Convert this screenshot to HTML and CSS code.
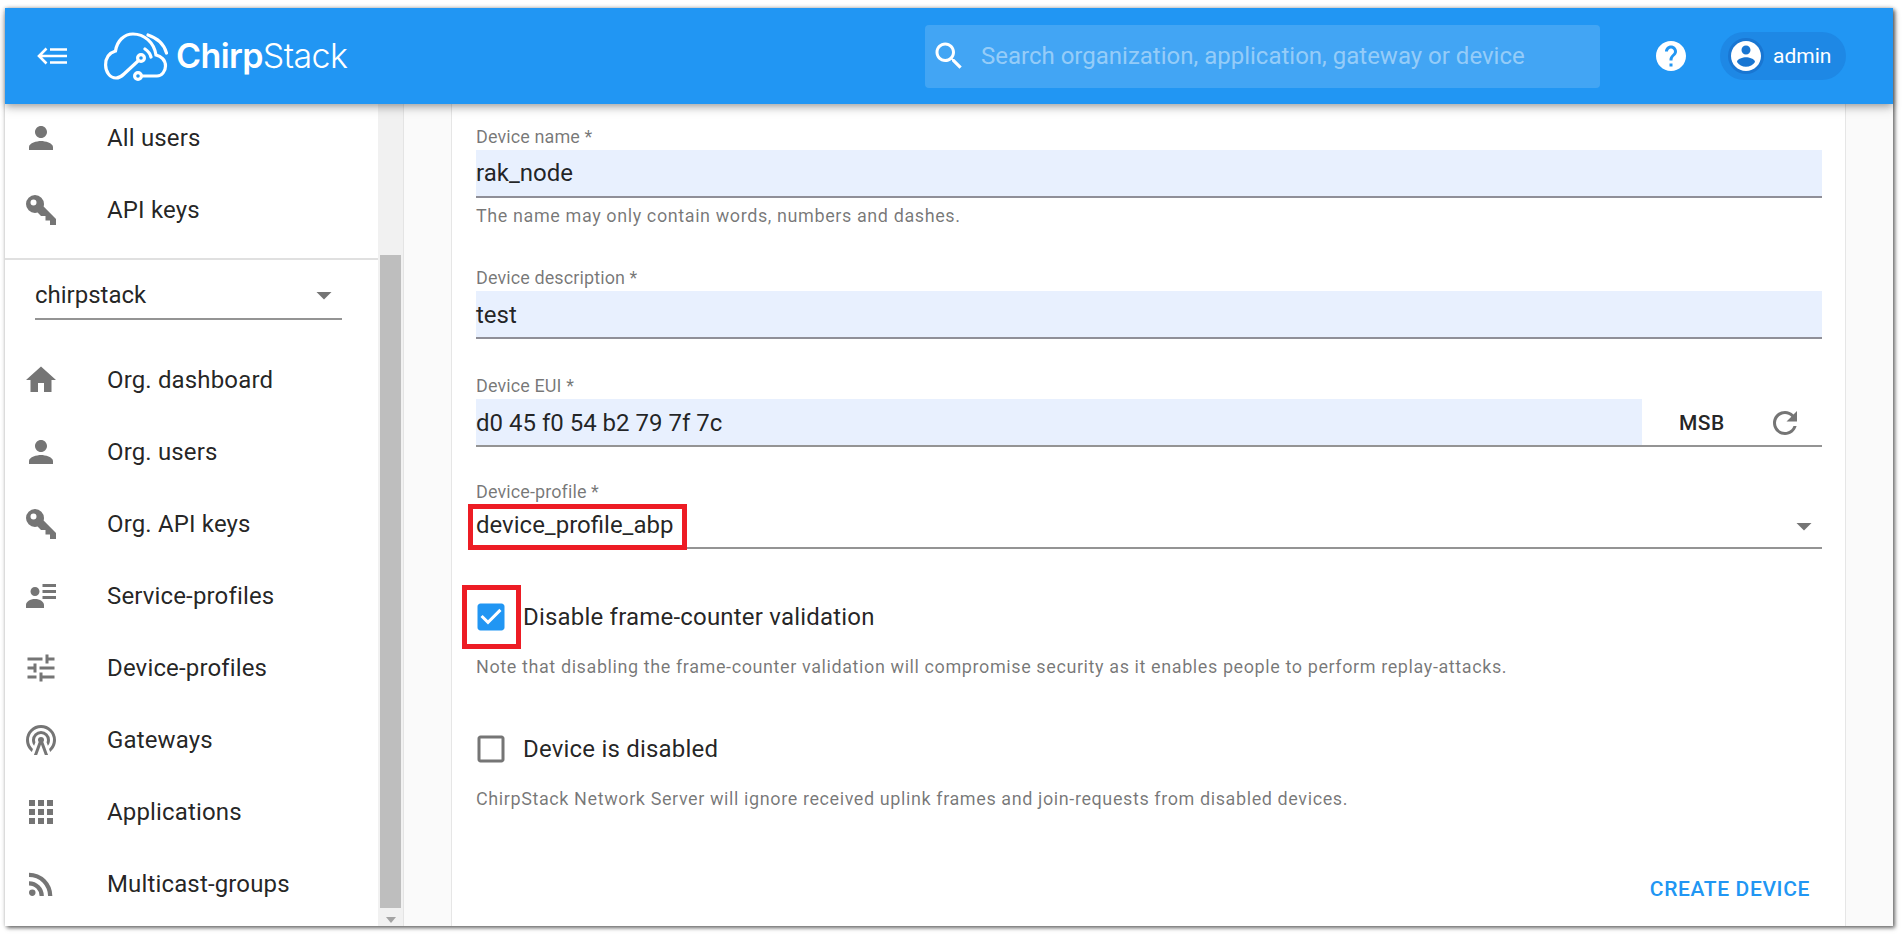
FILE: index.html
```html
<!DOCTYPE html>
<html lang="en">
<head>
<meta charset="utf-8">
<title>ChirpStack</title>
<link rel="stylesheet" href="styles.css">
</head>
<body>
<div class="frame">
  <header class="topbar">
    <svg class="menu-icon" viewBox="0 0 30 18"><path d="M9.5 1.5 2 9l7.5 7.5M2 9h28M13 2.5h17M13 15.5h17" fill="none" stroke="#fff" stroke-width="2.6"/></svg>
    <svg class="logo-mark" viewBox="0 0 64 49" fill="none" stroke="#fff" stroke-width="3.2" stroke-linecap="round">
      <path d="M38 44H53C58 44 61.5 39 61.5 34C61.5 28 57 24 52 23C50 10 40 2 29 2C20 2 13 9 11.5 19C5 21 1.6 26 1.6 33C1.6 40 6 46 12 46C16 46 18 44 20 42L34 29"/>
      <path d="M44 3C53 6 60 12 62.5 21M41 17C44 19 46 21 47 25"/>
      <circle cx="37" cy="26" r="3.4"/><circle cx="34" cy="44" r="3.4"/>
    </svg>
    <div class="logo-text"><b>Chirp</b>Stack</div>
    <div class="search">
      <svg class="ic36" viewBox="0 0 24 24"><path fill="#fff" d="M15.5 14h-.79l-.28-.27C15.41 12.59 16 11.11 16 9.5 16 5.91 13.09 3 9.5 3S3 5.91 3 9.5 5.91 16 9.5 16c1.61 0 3.09-.59 4.23-1.57l.27.28v.79l5 4.99L20.49 19l-4.99-5zm-6 0C7.01 14 5 11.99 5 9.5S7.01 5 9.5 5 14 7.01 14 9.5 11.99 14 9.5 14z"/></svg>
      <span class="search-text">Search organization, application, gateway or device</span>
    </div>
    <svg class="ic36 help" viewBox="0 0 24 24"><path fill="#fff" d="M12 2C6.48 2 2 6.48 2 12s4.48 10 10 10 10-4.48 10-10S17.52 2 12 2zm1 17h-2v-2h2v2zm2.07-7.75l-.9.92C13.45 12.9 13 13.5 13 15h-2v-.5c0-1.1.45-2.1 1.17-2.83l1.24-1.26c.37-.36.59-.86.59-1.41 0-1.1-.9-2-2-2s-2 .9-2 2H8c0-2.21 1.79-4 4-4s4 1.79 4 4c0 .88-.36 1.68-.93 2.25z"/></svg>
    <div class="chip">
      <span class="avatar"><svg class="ic36" viewBox="0 0 24 24"><path fill="#fff" d="M12 2C6.48 2 2 6.48 2 12s4.48 10 10 10 10-4.48 10-10S17.52 2 12 2zm0 3c1.66 0 3 1.34 3 3s-1.34 3-3 3-3-1.34-3-3 1.34-3 3-3zm0 14.2c-2.5 0-4.71-1.28-6-3.22.03-1.99 4-3.08 6-3.08 1.99 0 5.97 1.09 6 3.08-1.29 1.94-3.5 3.22-6 3.22z"/></svg></span>
      <span class="chip-label">admin</span>
    </div>
  </header>
  <div class="body">
    <nav class="sidebar">
      <div class="nav-inner">
        <a class="nav-item"><svg class="ic36" viewBox="0 0 24 24"><path d="M12 12c2.21 0 4-1.79 4-4s-1.79-4-4-4-4 1.79-4 4 1.79 4 4 4zm0 2c-2.67 0-8 1.34-8 4v2h16v-2c0-2.66-5.33-4-8-4z"/></svg><span>All users</span></a>
        <a class="nav-item"><svg class="ic36" viewBox="0 0 24 24"><path d="M22,18V22H18V19H15V16H12L9.74,13.74C9.19,13.91 8.61,14 8,14A6,6 0 0,1 2,8A6,6 0 0,1 8,2A6,6 0 0,1 14,8C14,8.61 13.91,9.19 13.74,9.74L22,18M7,5A2,2 0 0,0 5,7A2,2 0 0,0 7,9A2,2 0 0,0 9,7A2,2 0 0,0 7,5Z"/></svg><span>API keys</span></a>
        <div class="divider"></div>
        <div class="org-select">
          <span>chirpstack</span>
          <svg class="ic36 drop" viewBox="0 0 24 24"><path d="M7 10l5 5 5-5z"/></svg>
        </div>
        <a class="nav-item"><svg class="ic36" viewBox="0 0 24 24"><path d="M10 20v-6h4v6h5v-8h3L12 3 2 12h3v8z"/></svg><span>Org. dashboard</span></a>
        <a class="nav-item"><svg class="ic36" viewBox="0 0 24 24"><path d="M12 12c2.21 0 4-1.79 4-4s-1.79-4-4-4-4 1.79-4 4 1.79 4 4 4zm0 2c-2.67 0-8 1.34-8 4v2h16v-2c0-2.66-5.33-4-8-4z"/></svg><span>Org. users</span></a>
        <a class="nav-item"><svg class="ic36" viewBox="0 0 24 24"><path d="M22,18V22H18V19H15V16H12L9.74,13.74C9.19,13.91 8.61,14 8,14A6,6 0 0,1 2,8A6,6 0 0,1 8,2A6,6 0 0,1 14,8C14,8.61 13.91,9.19 13.74,9.74L22,18M7,5A2,2 0 0,0 5,7A2,2 0 0,0 7,9A2,2 0 0,0 9,7A2,2 0 0,0 7,5Z"/></svg><span>Org. API keys</span></a>
        <a class="nav-item"><svg class="ic36" viewBox="0 0 24 24"><path d="M11,9C11,10.66 9.66,12 8,12C6.34,12 5,10.66 5,9C5,7.34 6.34,6 8,6C9.66,6 11,7.34 11,9M14,20H2V18C2,15.79 4.69,14 8,14C11.31,14 14,15.79 14,18M22,12V14H13V12M22,8V10H13V8M22,4V6H13V4Z"/></svg><span>Service-profiles</span></a>
        <a class="nav-item"><svg class="ic36" viewBox="0 0 24 24"><path d="M3 17v2h6v-2H3zM3 5v2h10V5H3zm10 16v-2h8v-2h-8v-2h-2v6h2zM7 9v2H3v2h4v2h2V9H7zm14 4v-2H11v2h10zm-6-4h2V7h4V5h-4V3h-2v6z"/></svg><span>Device-profiles</span></a>
        <a class="nav-item"><svg class="ic36" viewBox="0 0 24 24"><path d="M12,10A2,2 0 0,1 14,12C14,12.5 13.82,12.94 13.53,13.29L16.7,22H14.57L12,14.93L9.43,22H7.3L10.47,13.29C10.18,12.94 10,12.5 10,12A2,2 0 0,1 12,10M12,8A4,4 0 0,0 8,12C8,12.5 8.1,13 8.28,13.46L7.4,15.86C6.53,14.81 6,13.47 6,12A6,6 0 0,1 12,6A6,6 0 0,1 18,12C18,13.47 17.47,14.81 16.6,15.86L15.72,13.46C15.9,13 16,12.5 16,12A4,4 0 0,0 12,8M12,4A8,8 0 0,0 4,12C4,14.36 5,16.5 6.64,17.94L5.92,19.94C3.54,18.11 2,15.23 2,12A10,10 0 0,1 12,2A10,10 0 0,1 22,12C22,15.23 20.46,18.11 18.08,19.94L17.36,17.94C19,16.5 20,14.36 20,12A8,8 0 0,0 12,4Z"/></svg><span>Gateways</span></a>
        <a class="nav-item"><svg class="ic36" viewBox="0 0 24 24"><path d="M4 8h4V4H4v4zm6 12h4v-4h-4v4zm-6 0h4v-4H4v4zm0-6h4v-4H4v4zm6 0h4v-4h-4v4zm6-10v4h4V4h-4zm-6 4h4V4h-4v4zm6 6h4v-4h-4v4zm0 6h4v-4h-4v4z"/></svg><span>Applications</span></a>
        <a class="nav-item"><svg class="ic36" viewBox="0 0 24 24"><path d="M6.18,15.64A2.18,2.18 0 0,1 8.36,17.82C8.36,19 7.38,20 6.18,20C5,20 4,19 4,17.82A2.18,2.18 0 0,1 6.18,15.64M4,4.44A15.56,15.56 0 0,1 19.56,20H16.73A12.73,12.73 0 0,0 4,7.27V4.44M4,10.1A9.9,9.9 0 0,1 13.9,20H11.07A7.07,7.07 0 0,0 4,12.93V10.1Z"/></svg><span>Multicast-groups</span></a>
      </div>
    </nav>
    <div class="scrollbar">
      <div class="thumb"></div>
      <div class="arrow"></div>
    </div>
    <main class="main">
      <form class="card">
        <div class="field">
          <label class="label">Device name *</label>
          <div class="fill">rak_node</div>
          <p class="helper">The name may only contain words, numbers and dashes.</p>
        </div>
        <div class="field desc">
          <label class="label">Device description *</label>
          <div class="fill low">test</div>
        </div>
        <div class="field eui">
          <label class="label">Device EUI *</label>
          <div class="eui-row">
            <div class="fill fill-eui low">d0 45 f0 54 b2 79 7f 7c</div>
            <span class="msb">MSB</span>
            <svg class="ic36 refresh" viewBox="0 0 24 24"><path d="M17.65 6.35C16.2 4.9 14.21 4 12 4c-4.42 0-7.99 3.58-7.99 8s3.57 8 7.99 8c3.73 0 6.84-2.55 7.73-6h-2.08c-.82 2.33-3.04 4-5.65 4-3.31 0-6-2.69-6-6s2.69-6 6-6c1.66 0 3.14.69 4.22 1.78L13 11h7V4l-2.35 2.35z"/></svg>
          </div>
        </div>
        <div class="field profile">
          <label class="label">Device-profile *</label>
          <div class="select">
            <span class="select-value">device_profile_abp</span>
            <svg class="ic36 drop" viewBox="0 0 24 24"><path d="M7 10l5 5 5-5z"/></svg>
            <div class="mark mark-select"></div>
          </div>
        </div>
        <div class="check-row first">
          <svg class="ic36 check-on" viewBox="0 0 24 24"><path d="M19 3H5c-1.11 0-2 .9-2 2v14c0 1.1.89 2 2 2h14c1.1 0 2-.9 2-2V5c0-1.1-.9-2-2-2zm-9 14l-5-5 1.41-1.41L10 14.17l7.59-7.59L19 8l-9 9z"/></svg>
          <span class="check-label">Disable frame-counter validation</span>
          <div class="mark mark-check"></div>
        </div>
        <p class="helper">Note that disabling the frame-counter validation will compromise security as it enables people to perform replay-attacks.</p>
        <div class="check-row second">
          <svg class="ic36" viewBox="0 0 24 24"><path d="M19 5v14H5V5h14m0-2H5c-1.1 0-2 .9-2 2v14c0 1.1.9 2 2 2h14c1.1 0 2-.9 2-2V5c0-1.1-.9-2-2-2z"/></svg>
          <span class="check-label">Device is disabled</span>
        </div>
        <p class="helper">ChirpStack Network Server will ignore received uplink frames and join-requests from disabled devices.</p>
        <div class="actions"><span class="create">CREATE DEVICE</span></div>
      </form>
    </main>
  </div>
</div>
</body>
</html>
```
FILE: styles.css
```css
* { box-sizing: border-box; }
html, body { margin: 0; height: 100%; }
body {
  background: #fff;
  padding: 8px 9px 9px 5px;
  font-family: Roboto, "Liberation Sans", sans-serif;
  color: rgba(0,0,0,.87);
  overflow: hidden;
}
.frame {
  height: 918px;
  display: flex;
  flex-direction: column;
  background: #fafafa;
  box-shadow: 2px 2px 4px rgba(0,0,0,.55), 0 0 4px rgba(0,0,0,.2);
}
.ic36 { width: 36px; height: 36px; flex: none; fill: #757575; display: block; }

.topbar {
  height: 96px;
  flex: none;
  background: #2196f3;
  display: flex;
  align-items: center;
  color: #fff;
  position: relative;
  z-index: 2;
  box-shadow: 0 3px 7px -1px rgba(0,0,0,.3), 0 6px 10px rgba(0,0,0,.1);
}
.menu-icon { width: 30px; height: 18px; margin-left: 32px; flex: none; }
.logo-mark { width: 64px; height: 49px; margin-left: 37px; flex: none; }
.logo-text {
  margin-left: 8px;
  padding-bottom: 2px;
  font-family: Inter, Roboto, sans-serif;
  font-size: 34px;
  font-weight: 300;
  letter-spacing: -.6px;
  width: 170px;
  white-space: nowrap;
}
.logo-text b { font-weight: 600; }
.search {
  margin-left: 579px;
  width: 675px;
  height: 63px;
  background: rgba(255,255,255,.15);
  border-radius: 4px;
  display: flex;
  align-items: center;
  padding-left: 6px;
}
.search .ic36 { fill: #fff; }
.search-text {
  margin-left: 14px;
  font-size: 24px;
  color: rgba(255,255,255,.45);
  white-space: nowrap;
}
.help { margin-left: 53px; }
.chip {
  margin-left: 31px;
  width: 126px;
  height: 48px;
  border-radius: 24px;
  background: #1e88e5;
  display: flex;
  align-items: center;
  padding-left: 8px;
}
.avatar { width: 36px; height: 36px; border-radius: 50%; background: #1976d2; flex: none; }
.chip-label { margin-left: 9px; font-size: 21px; font-weight: 400; }

.body { flex: 1; min-height: 0; display: flex; overflow: hidden; }
.sidebar { width: 373px; flex: none; background: #fff; overflow: hidden; }
.nav-inner { margin-top: -2px; }
.nav-item {
  height: 72px;
  display: flex;
  align-items: center;
  padding-left: 18px;
  font-size: 24px;
  letter-spacing: .15px;
}
.nav-item span { margin-left: 48px; }
.divider { height: 2px; margin-top: 12px; background: #e0e0e0; }
.org-select {
  margin: 0 36px 24px 30px;
  height: 60px;
  display: flex;
  align-items: center;
  justify-content: space-between;
  border-bottom: 2px solid #949494;
  font-size: 24px;
  padding-top: 12px;
}
.org-select .drop { margin-right: 0; }

.scrollbar {
  width: 25px;
  flex: none;
  background: #f1f1f1;
  display: flex;
  flex-direction: column;
  align-items: center;
  padding: 151px 2px 0;
}
.thumb { width: 21px; height: 653px; background: #bebebe; }
.arrow {
  margin-top: 9px;
  width: 0; height: 0;
  border-left: 5px solid transparent;
  border-right: 5px solid transparent;
  border-top: 6px solid #a3a3a3;
}

.main {
  flex: 1;
  min-width: 0;
  padding: 0 47px 0 47px;
  border-left: 1px solid #e4e4e4;
  background: #fafafa;
}
.card {
  height: 100%;
  background: #fff;
  border-left: 1px solid #e6e6e6;
  border-right: 1px solid #e6e6e6;
  padding: 22px 23px 0 24px;
}
.label {
  display: block;
  height: 22px;
  line-height: 22px;
  font-size: 18px;
  letter-spacing: .1px;
  color: rgba(0,0,0,.54);
  margin-bottom: 2px;
}
.fill {
  height: 48px;
  background: #e8f0fe;
  border-bottom: 2px solid #8f8f98;
  font-size: 24px;
  line-height: 46px;
}
.fill.low { line-height: 48px; }
.helper {
  margin: 8px 0 0;
  height: 20px;
  line-height: 20px;
  font-size: 18px;
  letter-spacing: .033em;
  color: rgba(0,0,0,.54);
  white-space: nowrap;
}
.desc { margin-top: 41px; }
.eui { margin-top: 36px; }
.eui-row {
  display: flex;
  align-items: center;
  height: 48px;
  border-bottom: 2px solid #949494;
}
.fill-eui { width: 1166px; border-bottom: 0; height: 46px; flex: none; }
.msb { margin-left: 37px; font-size: 21px; font-weight: 500; letter-spacing: .02em; padding-top: 2px; }
.refresh { margin-left: 42px; margin-top: 2px; }
.profile { margin-top: 34px; }
.select {
  position: relative;
  height: 44px;
  display: flex;
  align-items: center;
  justify-content: space-between;
  border-bottom: 2px solid #949494;
  font-size: 24px;
}
.select-value { margin-top: -2px; }
.select .drop { margin-right: 0; }
.mark { position: absolute; border: 5px solid #ed1c24; pointer-events: none; }
.mark-select { left: -8px; top: -1px; width: 219px; height: 46px; background: none; }
.check-row {
  position: relative;
  display: flex;
  align-items: center;
  height: 60px;
  margin-left: -3px;
  font-size: 24px;
  letter-spacing: .2px;
}
.check-row.first { margin-top: 38px; }
.check-row.second { margin-top: 42px; }
.check-label { margin-left: 14px; }
.check-on { fill: #2196f3; }
.mark-check { left: -11px; top: -2px; width: 59px; height: 64px; }
.check-row.first + .helper { margin-top: 10px; }
.check-row.second + .helper { margin-top: 10px; }
.actions { display: flex; justify-content: flex-end; margin-top: 68px; padding-right: 12px; }
.create { font-size: 21px; font-weight: 500; letter-spacing: .03em; color: #2196f3; line-height: 24px; }
```
